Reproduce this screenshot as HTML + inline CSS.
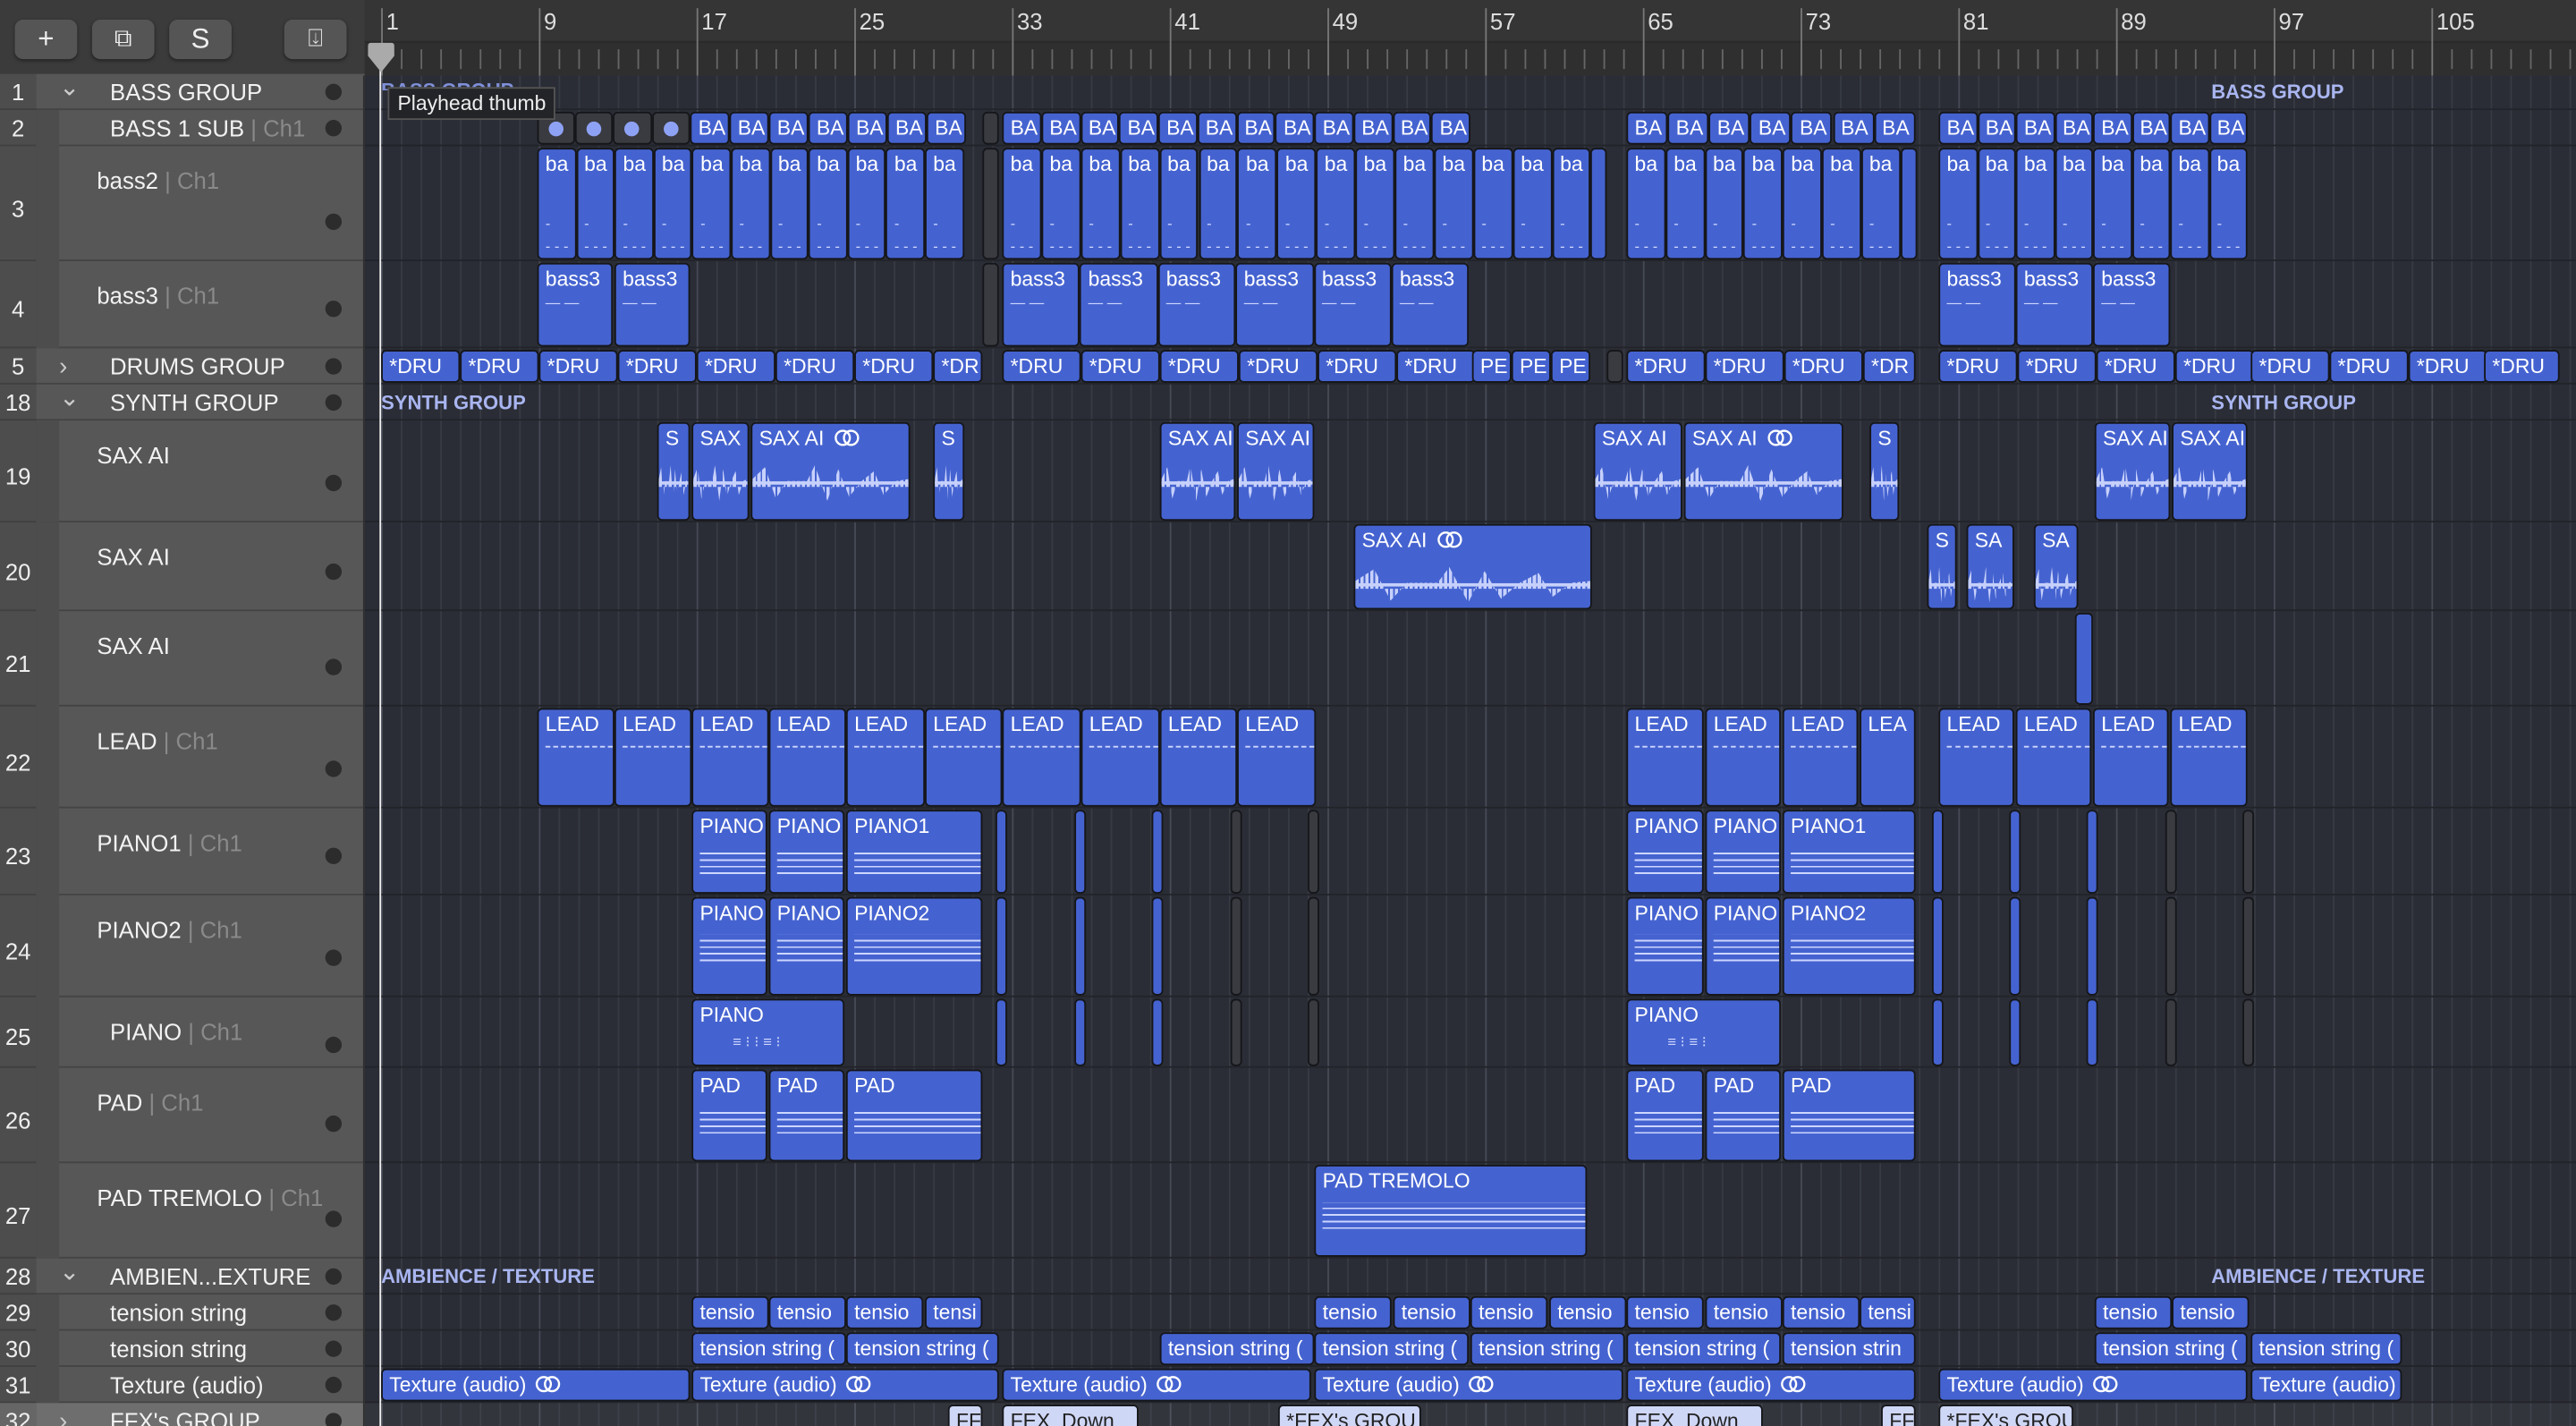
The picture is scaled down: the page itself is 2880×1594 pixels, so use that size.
<!DOCTYPE html>
<html><head><meta charset="utf-8">
<style>
html,body{margin:0;padding:0;background:#2a2d35;overflow:hidden;width:2880px;height:1594px}
#s{position:absolute;left:0;top:0;width:1568px;height:868px;transform:scale(1.83674,1.83641);transform-origin:0 0;font-family:"Liberation Sans",sans-serif;overflow:hidden;background:#2a2d35}
.a{position:absolute;box-sizing:border-box}
.hdr{left:0;top:0;width:222px;height:46px;background:#3b3b3b}
.btn{top:12px;height:24px;width:38px;background:#555;border-radius:5px;box-shadow:0 1px 2px #222;color:#eee;font-size:17px;text-align:center;line-height:24px}
.ruler{left:222px;top:0;width:1346px;height:46px;background:#353535}
.rn{top:5px;color:#ddd;font-size:14px}
.num{left:0;width:22px;background:#4d4d4d;color:#eee;font-size:14px;text-align:center}
.tp{left:22px;width:200px;background:#575757;border-bottom:1px solid #444}
.tn{color:#f2f2f2;font-size:14px;white-space:nowrap}
.tn span{color:#8a8a8a}
.dot{width:10px;height:10px;border-radius:50%;background:#2c2c2c}
.r{background:#4563d0;border:1px solid #15161a;border-radius:3px;color:#fff;font-size:12.5px;overflow:hidden;white-space:nowrap;padding:2px 0 0 4px;line-height:14px}
.d{background:#3a3b40}
.l{background:#cfd7f7;color:#222}
.gl{color:#a9b5f0;font-weight:bold;font-size:12px}
</style></head><body><div id="s"></div>
<script>
var S=document.getElementById('s'),H='';
function A(c,x,y,w,h,t,st){H+='<div class="a '+c+'" style="left:'+x+'px;top:'+y+'px;width:'+w+'px;height:'+h+'px;'+(st||'')+'">'+(t||'')+'</div>';}
for(var b=0;b<115;b++){var x=232+b*12;A('',x,46,1,822,'','background:'+(b%8==0?'#464a55':'#373a43'));}
var rows=[[1,45,22],[2,67,22],[3,89,70],[4,159,53],[5,212,22],[18,234,22],[19,256,62],[20,318,54],[21,372,58],[22,430,62],[23,492,53],[24,545,62],[25,607,43],[26,650,58],[27,708,58],[28,766,22],[29,788,22],[30,810,22],[31,832,22],[32,854,22]];
rows.forEach(function(r){A('',222,r[1]+r[2]-1,1346,1,'','background:#22242a');});
A('',222,854,1346,14,'','background:rgba(255,255,255,0.04)');
A('hdr',0,0,222,46);
A('btn',9,12,38,24,'+');A('btn',56,12,38,24,'⧉','font-size:15px');A('btn',103,12,38,24,'S');A('btn',173,12,38,24,'⍗','font-size:15px');
A('ruler',222,0,1346,46);
A('',222,25,1346,21,'','background:#2f2f2f');
A('',222,25,1346,1,'','background:#2a2a2a');
for(var b=0;b<115;b++){var x=232+b*12;A('',x,b%8==0?5:30,1,b%8==0?41:12,'','background:'+(b%8==0?'#777':'#666'));}
[1,9,17,25,33,41,49,57,65,73,81,89,97,105].forEach(function(n,i){A('rn',235+i*96,5,40,18,n);});
A('',231,34,1,834,'','background:#eee');
H+='<svg class="a" style="left:223px;top:26px" width="18" height="20"><path d="M1 2 Q1 0 3 0 H15 Q17 0 17 2 V8 L9 18 L1 8Z" fill="#aaa"/></svg>';
var tr={1:['BASS GROUP','',67,'v'],2:['BASS 1 SUB','Ch1',67],3:['bass2','Ch1',59],4:['bass3','Ch1',59],5:['DRUMS GROUP','',67,'>'],18:['SYNTH GROUP','',67,'v'],19:['SAX AI','',59],20:['SAX AI','',59],21:['SAX AI','',59],22:['LEAD','Ch1',59],23:['PIANO1','Ch1',59],24:['PIANO2','Ch1',59],25:['PIANO','Ch1',67],26:['PAD','Ch1',59],27:['PAD TREMOLO','Ch1',59],28:['AMBIEN...EXTURE','',67,'v'],29:['tension string','',67],30:['tension string','',67],31:['Texture (audio)','',67],32:["FFX's GROUP",'',67,'>']};
rows.forEach(function(r){var n=r[0],y=r[1],h=r[2],t=tr[n],sel=n==32;
 A('num',0,y,22,h,n,'line-height:'+(h>30?h+6:h)+'px;border-bottom:1px solid #404040;'+(sel?'background:#666;':''));
 A('tp',22,y,200,h,'',sel?'background:#6e6e6e':'');
 var grp=t[3];
 if(!grp&&n!=32){A('',22,y,14,h,'','background:#4d4d4d');}
 var ty=h>30?y+13:y+3;
 A('tn',t[2],ty,150,16,t[0]+(t[1]?' <span>| '+t[1]+'</span>':''));
 if(grp)A('tn',36,y+3,12,16,grp=='v'?'⌄':'›','color:#ccc;font-size:'+(grp=='v'?'15px;margin-top:-4px':'15px'));
 A('dot',198,h>30?y+h-29+(n==25?10:0):y+6,10,10);
});
A('',221,46,1,822,'','background:#2e2e2e');
A('gl',232,48,120,14,'BASS GROUP','color:#7f8fd8;clip-path:inset(0 0 50% 0)');A('gl',1346,49,120,14,'BASS GROUP');
A('gl',232,238,120,14,'SYNTH GROUP');A('gl',1346,238,120,14,'SYNTH GROUP');
A('gl',232,770,160,14,'AMBIENCE / TEXTURE');A('gl',1346,770,160,14,'AMBIENCE / TEXTURE');
var ry={};rows.forEach(function(r){ry[r[0]]=[r[1],r[2]];});
function R(row,x1,x2,t,c){var y=ry[row];A('r '+(c||''),x1,y[0]+1,x2-x1,y[1]-2,t);}
function seq(row,start,n,w,t,c){for(var i=0;i<n;i++)R(row,start+i*w,start+(i+1)*w,t,c);}
var L='<svg width="20" height="11" style="vertical-align:-1px;margin-left:5px"><circle cx="6" cy="5.5" r="4.3" fill="none" stroke="#fff" stroke-width="1.3"/><circle cx="11" cy="5.5" r="4.3" fill="none" stroke="#fff" stroke-width="1.3"/></svg>';
var dotr='<span style="display:inline-block;width:9px;height:9px;border-radius:50%;background:#8ea2f5;margin:3px 0 0 2px"></span>';
seq(2,327,4,23.2,dotr,'d');seq(2,420,7,24,'BA');R(2,598,608,'','d');seq(2,610,12,23.75,'BA');seq(2,990,7,25.1,'BA');seq(2,1180,8,23.5,'BA');
var bl='<div style="margin-top:22px;color:#cdd6ff;font-size:9px">-<br>- - -</div>';
seq(3,327,11,23.6,'ba'+bl);R(3,598,608,'','d');seq(3,610,15,23.9,'ba'+bl);R(3,968,978,'');seq(3,990,7,23.8,'ba'+bl);R(3,1157,1167,'');seq(3,1180,8,23.5,'ba'+bl);
var b3='bass3<div style="color:#cdd6ff;font-size:9px">— —</div>';
R(4,327,373,b3);R(4,374,420,b3);R(4,598,608,'','d');seq(4,610,6,47.4,b3);seq(4,1180,3,47,b3);
seq(5,232,7,48,'*DRU');R(5,568,598,'*DR');seq(5,610,6,48,'*DRU');seq(5,896,3,24,'PE');R(5,978,988,'','d');seq(5,990,3,48,'*DRU');R(5,1134,1166,'*DR');seq(5,1180,4,48,'*DRU');seq(5,1370,3,48,'*DRU');R(5,1512,1558,'*DRU');
var wf='<div style="margin:8px 0 0 -4px;height:24px;position:relative"><div style="position:absolute;left:0;right:0;top:11px;height:2px;background:#c6d0fb"></div><div style="position:absolute;left:0;right:0;top:0;bottom:0;background:repeating-linear-gradient(90deg,#c6d0fb 0 2px,transparent 2px 3px);clip-path:polygon(0 40%,8% 10%,15% 90%,22% 45%,35% 45%,40% 5%,48% 95%,55% 15%,62% 85%,70% 45%,78% 20%,84% 80%,92% 45%,100% 40%,100% 60%,0 60%)"></div></div>';
R(19,400,420,'S'+wf);R(19,421,456,'SAX'+wf);R(19,457,554,'SAX AI'+L+wf);R(19,568,587,'S'+wf);R(19,706,752,'SAX AI'+wf);R(19,753,800,'SAX AI'+wf);R(19,970,1024,'SAX AI'+wf);R(19,1025,1122,'SAX AI'+L+wf);R(19,1138,1156,'S'+wf);R(19,1275,1321,'SAX AI'+wf);R(19,1322,1368,'SAX AI'+wf);
R(20,824,969,'SAX AI'+L+wf);R(20,1173,1191,'S'+wf);R(20,1197,1226,'SA'+wf);R(20,1238,1265,'SA'+wf);
R(21,1263,1274,'');
var ld='LEAD<div style="margin-top:6px;border-top:1px dashed #cdd6ff"></div>';
[327,374,421,468,515,563,610,658,706,753,801].reduce(function(p,c){if(p)R(22,p,c,ld);return c;});
R(22,990,1037,ld);R(22,1038,1084,ld);R(22,1085,1131,ld);R(22,1132,1166,'LEA');
R(22,1180,1226,ld);R(22,1227,1273,ld);R(22,1274,1320,ld);R(22,1321,1368,ld);
var pl='<div style="margin-top:6px;height:18px;background:repeating-linear-gradient(180deg,transparent 0 3px,#cdd6ff 3px 4px)"></div>';
function thins(row){[606,654,701].forEach(function(x){R(row,x,x+7,'');});[749,796].forEach(function(x){R(row,x,x+7,'','d');});
 [1176,1223,1270].forEach(function(x){R(row,x,x+7,'');});[1318,1365].forEach(function(x){R(row,x,x+7,'','d');});}
[[23,'PIANO1'],[24,'PIANO2']].forEach(function(p){R(p[0],421,467,'PIANO'+pl);R(p[0],468,514,'PIANO'+pl);R(p[0],515,598,p[1]+pl);thins(p[0]);
 R(p[0],990,1037,'PIANO'+pl);R(p[0],1038,1084,'PIANO'+pl);R(p[0],1085,1166,p[1]+pl);});
R(25,421,514,'PIANO<div style="font-size:9px;color:#cdd6ff;margin:2px 0 0 20px">≡ ⁝ ⁝ ≡ ⁝</div>');thins(25);R(25,990,1084,'PIANO<div style="font-size:9px;color:#cdd6ff;margin:2px 0 0 20px">≡ ⁝ ≡ ⁝</div>');
R(26,421,467,'PAD'+pl);R(26,468,514,'PAD'+pl);R(26,515,598,'PAD'+pl);R(26,990,1037,'PAD'+pl);R(26,1038,1084,'PAD'+pl);R(26,1085,1166,'PAD'+pl);
R(27,800,966,'PAD TREMOLO'+pl);
[[421,'tensio'],[468,'tensio'],[515,'tensio'],[563,'tensi',598],[800,'tensio'],[848,'tensio'],[895,'tensio'],[943,'tensio'],[990,'tensio'],[1038,'tensio'],[1085,'tensio'],[1132,'tensi',1166],[1275,'tensio'],[1322,'tensio']].forEach(function(t){R(29,t[0],t[2]||t[0]+47,t[1]);});
var ts='tension string (';
R(30,421,515,ts);R(30,515,608,ts);R(30,706,800,ts);R(30,800,894,ts);R(30,895,989,ts);R(30,990,1084,ts);R(30,1085,1166,'tension strin');R(30,1275,1368,ts);R(30,1370,1462,ts);
var tx='Texture (audio)';
R(31,232,420,tx+L);R(31,421,608,tx+L);R(31,610,798,tx+L);R(31,800,988,tx+L);R(31,990,1166,tx+L);R(31,1180,1368,tx+L);R(31,1370,1462,tx);
R(32,577,598,'FF','l');R(32,610,693,'FEX_Down','l');R(32,778,865,"*FEX's GROU",'l');R(32,990,1073,'FEX_Down','l');R(32,1145,1166,'FF','l');R(32,1180,1262,"*FEX's GROU",'l');
H+='<div class="a" style="left:236px;top:53px;height:20px;white-space:nowrap;background:#232428;border:1px solid #555;color:#eee;font-size:12.5px;padding:2px 5px;line-height:14px">Playhead thumb</div>';
S.innerHTML=H;
</script></body></html>
